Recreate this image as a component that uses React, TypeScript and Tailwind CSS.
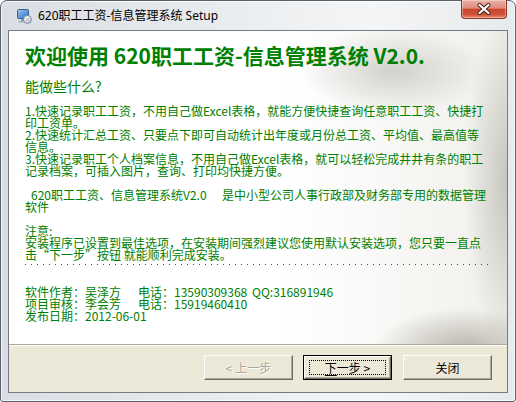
import React from 'react';

function SetupIcon() {
    return (
        <svg width="16" height="16" viewBox="0 0 16 16">
            <defs>
                <linearGradient id="scr" x1="0" y1="0" x2="1" y2="1">
                    <stop offset="0" stopColor="#9cc4f0" />
                    <stop offset="1" stopColor="#2f6fc4" />
                </linearGradient>
                <radialGradient id="cd" cx="0.4" cy="0.35" r="0.7">
                    <stop offset="0" stopColor="#ffffff" />
                    <stop offset="0.6" stopColor="#d6dde6" />
                    <stop offset="1" stopColor="#9aa7b8" />
                </radialGradient>
            </defs>
            <rect x="1.5" y="1.5" width="11" height="9" rx="1" fill="url(#scr)" stroke="#3e5f88" />
            <rect x="5" y="11" width="4" height="2" fill="#8595aa" />
            <rect x="2.5" y="13" width="9" height="1.5" fill="#a3afbf" />
            <circle cx="11.5" cy="11.5" r="4" fill="url(#cd)" stroke="#6f7c8e" strokeWidth="0.7" />
            <circle cx="11.5" cy="11.5" r="1.1" fill="#fff" stroke="#6f7c8e" strokeWidth="0.6" />
        </svg>
    );
}

function CloseGlyph() {
    return (
        <svg width="14" height="12" viewBox="0 0 14 12">
            <path d="M2.5 2 L11.5 10 M11.5 2 L2.5 10" stroke="#3d1a14" strokeWidth="4" strokeLinecap="round" />
            <path d="M2.5 2 L11.5 10 M11.5 2 L2.5 10" stroke="#ffffff" strokeWidth="2.2" strokeLinecap="round" />
        </svg>
    );
}

function TitleBar() {
    return (
        <div className="flex h-[29px] items-center pl-[8px]">
            <SetupIcon />
            <span className="ml-[6px] font-['Noto_Sans','Noto_Sans_CJK_SC',sans-serif] text-[12px] leading-[16px] text-black">
                620职工工资-信息管理系统 Setup
            </span>
            <div className="-mt-[1px] ml-auto mr-[1px] flex h-[19px] w-[46px] items-center justify-center self-start rounded-b-[4px] border border-t-0 border-[#8a3526] bg-[linear-gradient(to_bottom,#eab2a6_0%,#df8b79_45%,#c9442d_52%,#cf5139_80%,#e58a6c_100%)] shadow-[inset_0_0_0_1px_rgba(255,255,255,0.35)]">
                <CloseGlyph />
            </div>
        </div>
    );
}

function Line({ children, className = '' }: { children: React.ReactNode; className?: string }) {
    return <div className={`h-[12px] whitespace-nowrap leading-[12px] ${className}`}>{children}</div>;
}

function Content() {
    return (
        <div className="h-[313px] bg-[image:radial-gradient(ellipse_130px_60px_at_385px_40px,rgba(172,170,162,0.5),transparent_72%),radial-gradient(ellipse_60px_230px_at_500px_150px,rgba(168,166,158,0.6),transparent_75%),radial-gradient(ellipse_120px_55px_at_455px_318px,rgba(160,155,142,0.7),transparent_75%),linear-gradient(to_right,#ffffff_55%,#f1f0ec_100%)] pl-[16px] pt-[14px] text-[#008000]">
            <div className="h-[21px] whitespace-nowrap text-[21px] font-bold leading-[21px]">
                欢迎使用 620职工工资-信息管理系统 V2.0.
            </div>
            <div className="mt-[13px] h-[14px] text-[14px] leading-[14px]">能做些什么?</div>

            <div className="mt-[11.5px] text-[12px]">
                <Line>1.快速记录职工工资，不用自己做Excel表格，就能方便快捷查询任意职工工资、快捷打</Line>
                <Line>印工资单。</Line>
                <Line>2.快速统计汇总工资、只要点下即可自动统计出年度或月份总工资、平均值、最高值等</Line>
                <Line>信息。</Line>
                <Line>3.快速记录职工个人档案信息，不用自己做Excel表格，就可以轻松完成井井有条的职工</Line>
                <Line>记录档案，可插入图片，查询、打印均快捷方便。</Line>

                <Line className="mt-[12px] flex">
                    <span className="inline-block w-[197px] pl-[6px]">620职工工资、信息管理系统V2.0</span>
                    <span>是中小型公司人事行政部及财务部专用的数据管理</span>
                </Line>
                <Line>软件</Line>

                <Line className="mt-[12px]">注意:</Line>
                <Line>安装程序已设置到最佳选项，在安装期间强烈建议您使用默认安装选项，您只要一直点</Line>
                <Line>击“下一步”按钮 就能顺利完成安装。</Line>

                <div className="mt-[3.5px] h-[1px] w-[463px] bg-[image:linear-gradient(to_right,#008000_1px,transparent_1px)] bg-[length:6px_1px]" />

                <Line className="mt-[20.5px] flex">
                    <span className="inline-block w-[113px]">软件作者：吴泽方</span>
                    <span className="inline-block w-[114px]">电话：13590309368</span>
                    <span>QQ:316891946</span>
                </Line>
                <Line className="flex">
                    <span className="inline-block w-[113px]">项目审核：李会芳</span>
                    <span>电话：15919460410</span>
                </Line>
                <Line>发布日期：2012-06-01</Line>
            </div>
        </div>
    );
}

function Button({ children, disabled = false, isDefault = false }: { children: React.ReactNode; disabled?: boolean; isDefault?: boolean }) {
    const face = (
        <div className="flex h-full w-full items-center justify-center border border-b-[#716f64] border-l-white border-r-[#716f64] border-t-white bg-[#ece9d8] shadow-[inset_-1px_-1px_0_#aca899]">
            {isDefault ? (
                <div className="flex h-[15px] w-[77px] items-center justify-center border border-dotted border-black">
                    {children}
                </div>
            ) : (
                children
            )}
        </div>
    );
    return (
        <div
            className={`h-[25px] w-[89px] text-[12px] leading-[14px] ${disabled ? 'text-[#aca899] [text-shadow:1px_1px_0_#ffffff]' : 'text-black'} ${isDefault ? 'border border-black' : ''}`}
        >
            {face}
        </div>
    );
}

function Footer() {
    return (
        <div className="flex h-[46px] items-start justify-end bg-[#ece9d8] pr-[15px] pt-[9px]">
            <Button disabled>&lt; 上一步</Button>
            <div className="ml-[10px]">
                <Button isDefault>
                    <span>
                        <span className="underline underline-offset-2">下</span>一步 &gt;
                    </span>
                </Button>
            </div>
            <div className="ml-[11px]">
                <Button>关闭</Button>
            </div>
        </div>
    );
}

export default function App() {
    return (
        <div className="h-[402px] w-[516px] bg-white font-['Noto_Sans_CJK_SC',sans-serif]">
            <div className="flex h-full flex-col rounded-b-[3px] rounded-t-[7px] border border-[#5a6068] bg-[linear-gradient(to_right,#d9dee4_0%,#e8ebee_40%,#f4f5f6_72%,#e7eaed_100%)] px-[7px] pb-[8px] shadow-[inset_0_0_0_1px_rgba(255,255,255,0.75)]">
                <TitleBar />
                <div className="h-[363px] border border-[#767b82] bg-white">
                    <Content />
                    <div className="h-[1px] bg-[#aca899]" />
                    <div className="h-[1px] bg-white" />
                    <Footer />
                </div>
            </div>
        </div>
    );
}
